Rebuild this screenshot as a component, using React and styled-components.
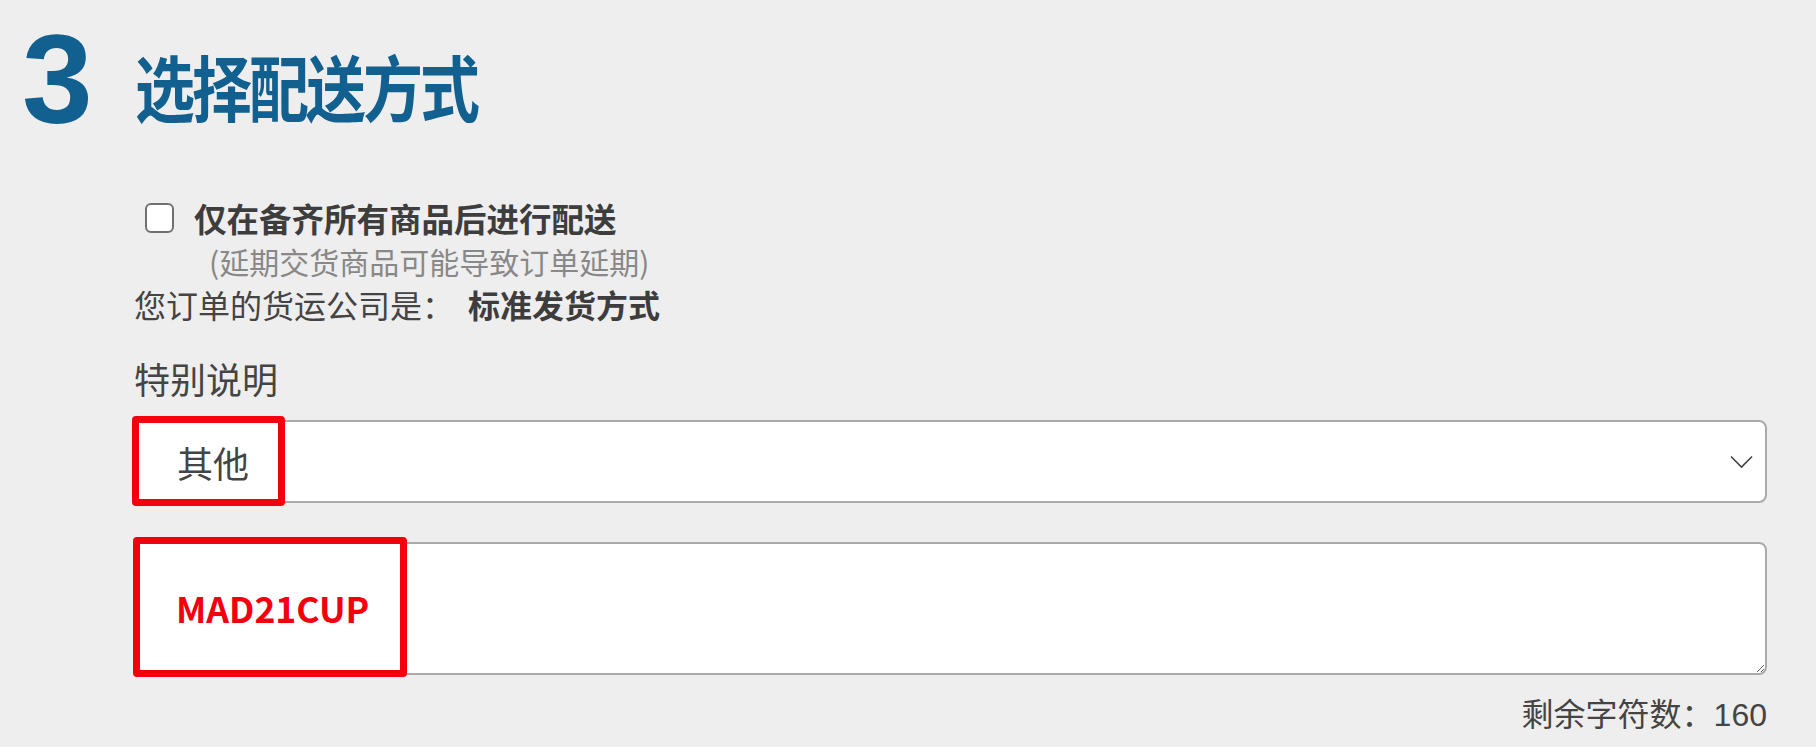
import React from "react";
import styled, { createGlobalStyle } from "styled-components";

const Global = createGlobalStyle`
  html, body {
    margin: 0;
    padding: 0;
    background: #eeeeee;
  }
  body {
    font-family: "Noto Sans CJK SC", "Noto Sans", sans-serif;
    color: #444;
  }
  * { box-sizing: border-box; }
`;

const Page = styled.div`
  width: 1816px;
  min-height: 747px;
  background: #eeeeee;
  padding: 16px 49px 0 0;
`;

const HeadingRow = styled.div`
  display: flex;
  align-items: center;
  height: 127px;
`;

const StepNumber = styled.div`
  font-family: "Liberation Sans", Arial, sans-serif;
  font-weight: 700;
  font-size: 127px;
  line-height: 127px;
  color: #11608f;
  margin-left: 22px;
  width: 113px;
`;

const Title = styled.h1`
  margin: 10px 0 0 0;
  font-family: "Noto Sans CJK SC", sans-serif;
  font-weight: 700;
  font-size: 60px;
  line-height: 60px;
  letter-spacing: -3px;
  color: #11608f;
  transform: scaleY(1.2);
  transform-origin: center;
`;

const Body = styled.div`
  margin-left: 133px;
  display: flex;
  flex-direction: column;
`;

const CheckRow = styled.label`
  display: flex;
  align-items: center;
  margin-top: 53px;
  height: 44px;
  padding-left: 12px;
  gap: 20px;
`;

const Checkbox = styled.input`
  appearance: none;
  margin: 0;
  width: 29px;
  height: 30px;
  border: 2.5px solid #707070;
  border-radius: 6px;
  background: #fff;
`;

const StrongText = styled.span`
  font-size: 32.5px;
  line-height: 44px;
  font-weight: 700;
  color: #3d3d3d;
`;

const Note = styled.div`
  font-size: 30px;
  line-height: 42px;
  color: #888;
  padding-left: 76px;
`;

const InfoLine = styled.div`
  font-size: 32px;
  line-height: 44px;
  color: #444;
  padding-left: 1px;
`;

const InfoValue = styled.span`
  font-weight: 700;
  color: #3d3d3d;
  margin-left: 14px;
`;

const FieldLabel = styled.div`
  margin-top: 30px;
  font-size: 36px;
  line-height: 44px;
  color: #444;
  padding-left: 1px;
`;

const FieldWrap = styled.div`
  position: relative;
  margin-top: ${(p) => p.$top}px;
`;

const SelectBox = styled.div`
  display: flex;
  align-items: center;
  justify-content: space-between;
  height: 83px;
  background: #fff;
  border: 2px solid #aaa;
  border-radius: 8px;
  padding: 0 12px 0 42px;
  font-size: 36px;
  color: #444;
`;

const TextArea = styled.textarea`
  display: block;
  width: 100%;
  height: 133px;
  margin: 0;
  background: #fff;
  border: 2px solid #aaa;
  border-radius: 8px;
  resize: vertical;
  outline: none;
  font-family: inherit;
`;

const Highlight = styled.div`
  position: absolute;
  left: ${(p) => p.$left}px;
  top: ${(p) => p.$top}px;
  width: ${(p) => p.$w}px;
  height: ${(p) => p.$h}px;
  border: 7px solid #f3000f;
  border-radius: 4px;
  display: flex;
  align-items: center;
  padding-left: 36px;
  pointer-events: none;
`;

const CodeText = styled.span`
  font-family: "Noto Sans CJK SC", sans-serif;
  font-weight: 700;
  font-size: 35.5px;
  color: #f3000f;
`;

const Counter = styled.div`
  margin-top: 20px;
  display: flex;
  justify-content: flex-end;
  font-family: "Liberation Sans", "Noto Sans CJK SC", sans-serif;
  font-size: 32px;
  line-height: 40px;
  color: #444;
`;

const Chevron = () => (
  <svg width="23" height="14" viewBox="0 0 23 14" fill="none">
    <path d="M1 1.5 L11.5 12 L22 1.5" stroke="#444" strokeWidth="1.6" />
  </svg>
);

export default function App() {
  return (
    <Page>
      <Global />
      <HeadingRow>
        <StepNumber>3</StepNumber>
        <Title>选择配送方式</Title>
      </HeadingRow>
      <Body>
        <CheckRow>
          <Checkbox type="checkbox" />
          <StrongText>仅在备齐所有商品后进行配送</StrongText>
        </CheckRow>
        <Note>(延期交货商品可能导致订单延期)</Note>
        <InfoLine>
          您订单的货运公司是：<InfoValue>标准发货方式</InfoValue>
        </InfoLine>
        <FieldLabel>特别说明</FieldLabel>
        <FieldWrap $top={20}>
          <SelectBox>
            <span>其他</span>
            <Chevron />
          </SelectBox>
          <Highlight $left={-1} $top={-4} $w={153} $h={90} />
        </FieldWrap>
        <FieldWrap $top={39}>
          <TextArea />
          <Highlight $left={0} $top={-5} $w={274} $h={140}>
            <CodeText>MAD21CUP</CodeText>
          </Highlight>
        </FieldWrap>
        <Counter>剩余字符数：160</Counter>
      </Body>
    </Page>
  );
}
